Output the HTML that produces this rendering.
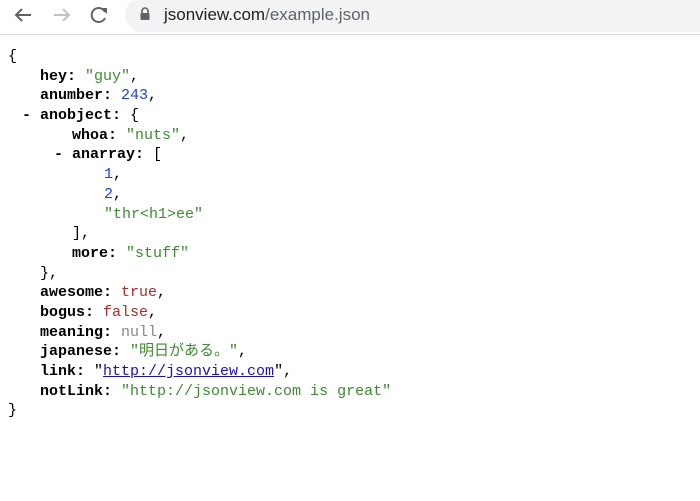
<!DOCTYPE html>
<html><head><meta charset="utf-8"><style>
body{margin:0;width:700px;height:501px;background:#fff;overflow:hidden;position:relative}
.bar{position:absolute;left:0;top:0;width:700px;height:34px;background:#fff;border-bottom:1px solid #dadce0}
.pill{position:absolute;left:125px;top:-2px;width:600px;height:34px;border-radius:17px;background:#f1f3f4}
.url{position:absolute;left:164px;top:5px;font:17px "Liberation Sans",sans-serif;color:#202124}
.url span{color:#5f6368}
.c{position:absolute;left:8px;top:47px;font:15px/19.7px "Liberation Mono","Noto Sans CJK JP",monospace;color:#000}
.c div{height:19.7px;white-space:pre}
.l1{padding-left:32px}.l2{padding-left:64px}.l3{padding-left:96px}
.m{position:relative}
.m i{position:absolute;left:-18px;font-style:normal;font-weight:bold}
b{font-weight:bold}
.s{color:#3c8c2e}.n{color:#1a3cf5}.bo{color:#b02a2a}.nu{color:#888}
a{color:#1a0dcc;text-decoration:underline}
</style></head><body>
<div class="bar">
<div class="pill"></div>
<svg style="position:absolute;left:0;top:0" width="125" height="34">
<g fill="none" stroke-width="2">
<path d="M31 15H16M22 9l-6 6 6 6" stroke="#5f6368"/>
<path d="M54 15h15M63 9l6 6-6 6" stroke="#bdc1c6"/>
<path d="M105 12a7 7 0 1 0 0 6" stroke="#5f6368"/>
</g>
<path d="M101 8h6v6z" fill="#5f6368"/>
</svg>
<svg style="position:absolute;left:139px;top:7px" width="12" height="14"><path d="M3 6V4a3 3 0 0 1 6 0v2" fill="none" stroke="#5f6368" stroke-width="1.6"/><rect x="1.5" y="6" width="9" height="7" rx="1" fill="#5f6368"/></svg>
<div class="url">jsonview.com<span>/example.json</span></div>
</div>
<div class="c"><div>{</div><div class="l1"><b>hey:</b> <span class="s">"guy"</span>,</div><div class="l1"><b>anumber:</b> <span class="n">243</span>,</div><div class="l1"><span class="m"><i>-</i></span><b>anobject:</b> {</div><div class="l2"><b>whoa:</b> <span class="s">"nuts"</span>,</div><div class="l2"><span class="m"><i>-</i></span><b>anarray:</b> [</div><div class="l3"><span class="n">1</span>,</div><div class="l3"><span class="n">2</span>,</div><div class="l3"><span class="s">"thr&lt;h1&gt;ee"</span></div><div class="l2">],</div><div class="l2"><b>more:</b> <span class="s">"stuff"</span></div><div class="l1">},</div><div class="l1"><b>awesome:</b> <span class="bo">true</span>,</div><div class="l1"><b>bogus:</b> <span class="bo">false</span>,</div><div class="l1"><b>meaning:</b> <span class="nu">null</span>,</div><div class="l1"><b>japanese:</b> <span class="s">"明日がある。"</span>,</div><div class="l1"><b>link:</b> "<a>http://jsonview.com</a>",</div><div class="l1"><b>notLink:</b> <span class="s">"http://jsonview.com is great"</span></div><div>}</div></div>
</body></html>
